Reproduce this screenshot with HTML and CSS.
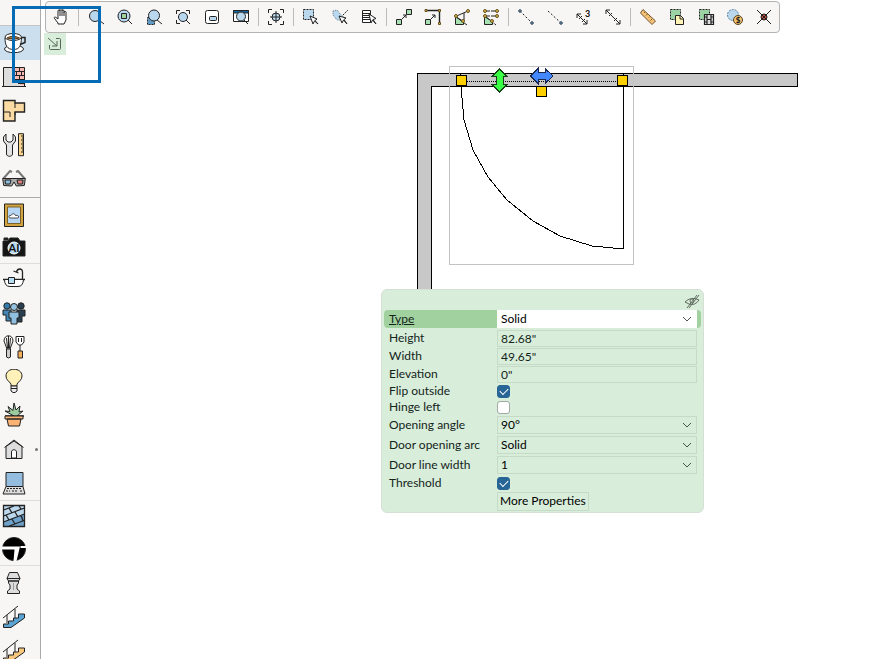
FILE: index.html
```html
<!DOCTYPE html>
<html lang="en">
<head>
<meta charset="utf-8">
<title>Floor plan editor</title>
<link rel="stylesheet" href="styles.css">
</head>
<body>
<nav class="sidebar" aria-label="Tools">
  <div class="side-head"><span class="dot"></span></div>
  <div class="group group-main">
    <button class="tool active" aria-label="Furniture"><svg viewBox="0 0 24 24"><ellipse cx="12" cy="18" rx="9.5" ry="3.7" fill="#fff"/><path d="M3 7c0 7 2 11.500 8.500 11.500S19 14 19.500 7z" fill="#fff"/><ellipse cx="11.200" cy="6" rx="8.200" ry="3.500" fill="#fff"/><path d="M5 7q6-3.500 12.500 0-6 2.500-12.500 0z" fill="#a97640" stroke="#593815" stroke-width="1"/><path d="M19.500 6.500h3.500v5l-5 2" fill="none" stroke-width="1.500"/></svg></button>
    <button class="tool" aria-label="Walls"><svg viewBox="0 0 24 24"><path d="M1.500 21V2.500H12V12l7 9z" fill="#ddd" stroke="none"/><path d="M11 2.500h11.500v18H19L13.500 14z" fill="#f6b8b0" stroke="none"/><path d="M1.500 22V2.500h21V22M0 21.500h24M12 6.500h10M12 10.500h10M13 14.500h9M16 18.500h6M17.500 3v3M14.500 7v3M19.500 7v3M17.500 11v3M15.500 15v3M20.500 15v3" fill="none"/></svg></button>
    <button class="tool" aria-label="Rooms"><svg viewBox="0 0 24 24"><path d="M1.500 1.500H13V4h9.500v9H13v9H1.500z" fill="#fcdaa3" stroke-width="1.400"/><path d="M13 4v5M1.500 13H8v5M13 13v3" fill="none"/></svg></button>
    <button class="tool" aria-label="Settings"><svg viewBox="0 0 24 24"><path d="M1.500 4v4l3 4v9c0 3 6 3 6 0v-9l3-4V4l-2.500-3v6L9 9H6L4 7V1z" fill="#e4e4e4"/><path d="M16.500.7h5v22h-5z" fill="#fbd58e"/><path d="M19 3h2.500M20 5h1.500M19 7h2.500M20 9h1.500M19 11h2.500M20 13h1.500M19 15h2.500M20 17h1.500M19 19h2.500" fill="none"/></svg></button>
    <button class="tool" aria-label="3D view"><svg viewBox="0 0 24 24"><path d="M1 12l7-8 2 1M23 12l-7-8-2 1" fill="none" stroke="#777" stroke-width="2"/><path d="M.7 11.500h22.600l-1 7-8 .500-2.300-4-2.300 4-8-.500z" fill="#aaa"/><path d="M3 13h6l-1 4H3.500z" fill="#8bbddd"/><path d="M15 13h6l-.500 4H16z" fill="#dd827e"/></svg></button>
  </div>
  <div class="group group-media">
    <button class="tool" aria-label="Pictures"><svg viewBox="0 0 24 24"><path d="M2.500 1h19v22.500h-19z" fill="#d3a340"/><path d="M5.500 4h13v16.500h-13z" fill="#b7d6f5" stroke="#7d6227"/><path d="M8 15c-2-1-1-3 1-2.500 1-2.500 4-2 4.500 0 3-.500 4 1.500 2.500 2.500z" fill="#fff" stroke-width=".8"/></svg></button>
    <button class="tool" aria-label="AI render"><svg viewBox="0 0 24 24"><path d="M1 6h5l2-3h8l2 3h5v15H1z" fill="#151515"/><path d="M2 3h4v2H2z" fill="#222"/><circle cx="12" cy="13" r="6" fill="#b6d8ed" stroke="#fff"/><text x="12" y="17" class="ai">AI</text></svg></button>
  </div>
  <div class="group group-objects">
    <button class="tool" aria-label="Bathroom"><svg viewBox="0 0 24 24"><path d="M20.500 12V5c0-4-5-4-6 0M11.500 4l5 2M1 12.500h22" fill="none" stroke-width="1.300"/><path d="M2.500 12.500q0 7 5.500 7h8q5 0 5.500-7z" fill="#fff"/><path d="M6.500 10.500h6v6h-6z" fill="#b9dcf0"/></svg></button>
    <button class="tool" aria-label="People"><svg viewBox="0 0 24 24"><circle cx="5" cy="5" r="3.200" fill="#347aaa"/><circle cx="19" cy="5" r="3.200" fill="#293f51"/><path d="M1 9h8l1 11H4v-6H1z" fill="#4186b4"/><path d="M15 9h8v6h-3v6h-6z" fill="#293f51"/><circle cx="12" cy="6" r="3.500" fill="#94c2df"/><path d="M7 11h10v6h-2v6H9v-6H7z" fill="#91bfdf"/></svg></button>
    <button class="tool" aria-label="Kitchen"><svg viewBox="0 0 24 24"><path d="M5 14L2 6c0-7 9-7 9 0l-3 8zM5.500 13L4.500 3M7.500 13l1-10M6.500 13V1" fill="none"/><path d="M4.500 14h4v8q-2 2-4 0z" fill="#ccc"/><path d="M14 1.500h8V7l-2.500 3h-3L14 7zM18 10v6" fill="#fff"/><path d="M16.500 3v4M19.500 3v4"/><path d="M16 16h4.500v7H16z" fill="#f2ae58"/></svg></button>
    <button class="tool" aria-label="Lighting"><svg viewBox="0 0 24 24"><path d="M9 17v-2c-2-3-5-4-5-8 0-9 16-9 16 0 0 4-3 5-5 8v2z" fill="#fff1b7"/><path d="M9 17h6v5l-2 1.500h-2L9 22zM9 19.500h6" fill="#eee"/></svg></button>
    <button class="tool" aria-label="Plants"><svg viewBox="0 0 24 24"><path d="M12 13L3 8l5 .500-2-5 5 4L12 0l2 7 4-4-1 6 4-1-6 5 7 0H3z" fill="#9bcb9f"/><path d="M3 13h18v3H3zM5 16h14l-1.500 7h-11z" fill="#fab275"/></svg></button>
    <button class="tool with-dot" aria-label="Buildings"><svg viewBox="0 0 24 24"><path d="M4 9.500v12h16v-12L12 4z" fill="#ddd"/><path d="M2.500 10.500L12 3l9.500 7.500" fill="none"/><path d="M9.500 21v-6c0-3 5-3 5 0v6z" fill="#fff"/></svg><span class="dot"></span></button>
    <button class="tool" aria-label="Electronics"><svg viewBox="0 0 24 24"><path d="M4 1.500h17v14H4z" fill="#95bde0"/><path d="M4 15.500h17l2 7.500H1z" fill="#ddd"/><path d="M5 17.500h15M4 20h4M10 20h6M18 20h3" fill="none" stroke-dasharray="2 1"/></svg></button>
  </div>
  <div class="group group-surfaces">
    <button class="tool" aria-label="Textures"><svg viewBox="0 0 24 24"><path d="M1.500 1.500h21v21h-21z" fill="#bcd8ec"/><path d="M2 18l20-8v12H2z" fill="#6da1ca" stroke="none"/><path d="M1.500 6L12 2M1.500 12l21-8M1.500 18l21-8M6 22.500l16-6M7 4l3 5M17 2l2 3M13 8l3 5M4 11l3 5M10 15l3 5M19 11l2 6M1.500 1.500h21v21h-21z" fill="none" stroke-width="1.300"/></svg></button>
    <button class="tool" aria-label="Terrain"><svg viewBox="0 0 24 24"><circle cx="12" cy="12" r="11.500" fill="#000"/><path d="M0 9.500h18L14.500 24h-3l1-11.500H0zM18.500 9H24v2h-5.500z" fill="#fff" stroke="none"/></svg></button>
  </div>
  <div class="group group-structure">
    <button class="tool" aria-label="Columns"><svg viewBox="0 0 24 24"><path d="M7.500 1.500h8L18 7.500 16.500 10h-10L5 7.500zM6.500 10h10v2l-1.500 2v4l2.500 2v2.500h-12V20L8 18v-4l-1.500-2z" fill="#ddd"/><path d="M5 7.500h13" fill="none"/><path d="M11.500 12v7" stroke="#999"/></svg></button>
    <button class="tool" aria-label="Stairs"><svg viewBox="0 0 24 24"><path d="M1.500 22.500V19h5v-3h5v-3h5v-4h6v4L9 22.500z" fill="#5ba3d2"/><path d="M1 13L16 1M5 10v8M13 4v9" fill="none"/></svg></button>
    <button class="tool" aria-label="Steps"><svg viewBox="0 0 24 24"><path d="M1.500 22.500V19h5v-3h5v-3h5v-4h6v4L9 22.500z" fill="#f8c77e"/><path d="M1 13L16 1M5 10v8M13 4v9" fill="none"/></svg></button>
  </div>
</nav>
<main class="workspace">
  <svg class="plan" viewBox="41 0 760 300" role="img" aria-label="Floor plan with door">
    <path d="M417.500 300V73.500H797.500V86.500H431.500V300" fill="#c8c8c8" stroke="#000"/>
    <path d="M449.500 66.500h184v198h-184z" fill="none" stroke="#c3c3c3"/>
    <path d="M460.500 73v13M623.500 73v176L592 246 560 236 533 221 507 200 488 177 473 150 464 120 461 87" fill="none" stroke="#000"/>
    <path d="M467 81.500h150" stroke="#000" stroke-dasharray="1 1"/>
    <g fill="#ffd000" stroke="#000"><path d="M456.500 75.500h10v10h-10zM617.500 75.500h10v10h-10zM536.500 86.500h10v10h-10z"/></g>
    <path d="M499.500 69l7.500 7.500h-4v8h4L499.500 92 492 84.500h4v-8h-4z" fill="#39ff45" stroke="#173f19"/>
    <path d="M530.500 76l7.500-7.500v4h7v-4l8 7.500-8 7.500v-4h-7v4z" fill="#4387ff" stroke="#1a2850"/>
  </svg>
  <div class="toolbar" role="toolbar" aria-label="Plan tools">
    <button aria-label="Pan"><svg viewBox="0 0 20 20"><path d="M7 16L3.500 11.500c-1-1 .500-2 1.500-1l2 1.500V4c0-1.500 2-1.500 2 0V2.500c0-1.500 2-1.500 2 0V4c0-1.500 2-1.500 2 0v1.500c0-1.500 2-1.500 2 0V13l-2 4H7zM9 4v5M11 4v5M13 5v4" fill="#fff"/></svg></button>
    <span class="sep"></span>
    <button aria-label="Zoom"><svg viewBox="0 0 20 20"><path d="M13 13l5 4"/><circle cx="9" cy="9" r="5.500" fill="#b9d8ee"/></svg></button>
    <button aria-label="Zoom to level"><svg viewBox="0 0 20 20"><path d="M13 13l4 4"/><circle cx="9" cy="9" r="6" fill="#b9d8ee"/><path d="M6.500 6.500h5v5h-5z" fill="#9ed19c"/></svg></button>
    <button aria-label="Zoom to selection"><svg viewBox="0 0 20 20"><path d="M3.500 10.500h7v7h-7z" fill="#609ac5" stroke-dasharray="2 1"/><path d="M13 13l5 4"/><circle cx="10" cy="8.500" r="5.500" fill="#b9d8ee"/></svg></button>
    <button aria-label="Zoom to fit"><svg viewBox="0 0 20 20"><path d="M3.500 7V3.500H7M13 3.500h3.500V7M3.500 13v3.500H7M13 13l4 4" fill="none"/><circle cx="10" cy="10" r="4.500" fill="#b9d8ee"/></svg></button>
    <button aria-label="Picture in picture"><svg viewBox="0 0 20 20"><rect x="3.500" y="3.500" width="13" height="13" rx="2" fill="#fff"/><rect x="7.500" y="9.500" width="7" height="4" rx="1" fill="#b9d8ee"/></svg></button>
    <button aria-label="Preview window"><svg viewBox="0 0 20 20"><path d="M2.500 3.500h15v11h-15z" fill="#fff"/><path d="M2.500 3.500h15V6h-15z" fill="#1768a0"/><path d="M13 13l4 4"/><circle cx="10" cy="9.500" r="4.500" fill="#b9d8ee"/></svg></button>
    <span class="sep"></span>
    <button aria-label="Center"><svg viewBox="0 0 20 20"><path d="M2.500 6V2.500H6M14 2.500h3.500V6M2.500 14v3.500H6M14 17.500h3.500V14" fill="none"/><circle cx="10" cy="10" r="4" fill="#b9d8ee"/><path d="M10 4v12M4 10h12"/></svg></button>
    <span class="sep"></span>
    <button aria-label="Select area"><svg viewBox="0 0 20 20"><path d="M2.500 2.500h10v10h-10z" fill="#b9d8ee" stroke-dasharray="2 1"/><path d="M9 9l3 8 1.500-3 3.500 3-3-3.500 2-1.500z" fill="#fff"/></svg></button>
    <button aria-label="Lasso"><svg viewBox="0 0 20 20"><path d="M3 4l4-1 4 5 3 2-2 3-5 0-4-5z" fill="#b9d8ee" stroke="#678" stroke-dasharray="1 1"/><path d="M13 8l5-5" stroke-dasharray="2 1"/><path d="M9 9l3 7 1.500-3 3.500 4-3-4.500 2-1.500z" fill="#fff"/></svg></button>
    <button aria-label="Select from list"><svg viewBox="0 0 20 20"><path d="M3.500 3.500h8v12h-8z" fill="#fff"/><path d="M4 6.500h7M4 8.500h7M4 10.500h7M4 12.500h7"/><path d="M10 7l2 9 1.500-3 3.500 4-3-4.500 3-1z" fill="#fff"/></svg></button>
    <span class="sep"></span>
    <button aria-label="Resize"><svg viewBox="0 0 20 20"><path d="M12.500 2.500h5v5h-5zM2.500 12.500h5v5h-5z" fill="#a8e0b4"/><path d="M8 12l4-4M9 8h3v3" fill="none"/></svg></button>
    <button aria-label="Resize from corner"><svg viewBox="0 0 20 20"><path d="M3 3.500h13.500V17" fill="none" stroke-width="1.400"/><path d="M2.500 12.500h5v5h-5z" fill="#a8e0b4"/><path d="M8 12l4-4M9 8h3v3" fill="none"/><path d="M2 2.500h2v2H2zM15.500 2.500h2v2h-2zM15.500 15.500h2v2h-2z" fill="#ddb449" stroke="#665321"/></svg></button>
    <button aria-label="Rotate point"><svg viewBox="0 0 20 20"><path d="M3.500 9.500l8 5v3h-8z" fill="#a8e0b4"/><path d="M3.500 9.500L16 4M3.500 9.500L15 18M12 6v7" fill="none"/><g fill="#ddb449" stroke="#665321"><circle cx="4" cy="9" r="1.500"/><circle cx="16" cy="4" r="1.500"/><circle cx="11" cy="14" r="1.500"/></g></svg></button>
    <button aria-label="Rotate edge"><svg viewBox="0 0 20 20"><path d="M3.500 9.500l8 5v3h-8z" fill="#a8e0b4"/><path d="M4 4h13M4 9h13M4 9l11 9" fill="none" stroke-dasharray="5 1"/><g fill="#ddb449" stroke="#665321"><circle cx="4" cy="4" r="1.500"/><circle cx="16" cy="4" r="1.500"/><circle cx="4" cy="9" r="1.500"/><circle cx="16" cy="9" r="1.500"/><circle cx="11" cy="14" r="1.500"/></g></svg></button>
    <span class="sep"></span>
    <button aria-label="Line"><svg viewBox="0 0 20 20"><path d="M4 4l12 12" stroke-dasharray="2 2"/><g fill="#6f91ac" stroke="#354b60"><circle cx="4" cy="4" r="1.300"/><circle cx="16" cy="16" r="1.300"/></g></svg></button>
    <button aria-label="Line end"><svg viewBox="0 0 20 20"><path d="M3 4l13 12" stroke-dasharray="2 2"/><circle cx="16" cy="16" r="1.300" fill="#6f91ac" stroke="#354b60"/></svg></button>
    <button aria-label="Dimension steps"><svg viewBox="0 0 20 20"><path d="M3 7l10 10M3 11V7h4M13 13v4H9M5 12l3-3M8 15l3-3" fill="none"/><text x="11" y="10" class="three">3</text></svg></button>
    <button aria-label="Dimension"><svg viewBox="0 0 20 20"><path d="M3 3l14 14M3 7V3h4M17 13v4h-4M6 9l3-3M11 14l3-3" fill="none"/></svg></button>
    <span class="sep"></span>
    <button aria-label="Measure"><svg viewBox="0 0 20 20"><path d="M5 2.500L17.500 14 14 17.500 2.500 6z" fill="#f7c477" stroke="#70542d"/><path d="M7 5L6 6M9.500 7L8 8.500M12 9.500L11 10.500M14 12l-1.500 1.500" stroke="#70542d"/></svg></button>
    <button aria-label="Copy to page"><svg viewBox="0 0 20 20"><path d="M3.500 2.500h10v10h-10z" fill="#9bd3a5" stroke-dasharray="2 1"/><path d="M8.500 8.500h5l3 3v6h-8z" fill="#fff4b6"/><path d="M13 9v3h3" fill="none"/></svg></button>
    <button aria-label="Copy to film"><svg viewBox="0 0 20 20"><path d="M3.500 2.500h10v10h-10z" fill="#9bd3a5" stroke-dasharray="2 1"/><path d="M8.500 7.500h9v10h-9zM11 8v9M15 8v9M11 12.500h4M9 10h2M9 15h2M15 10h2M15 15h2" fill="#ddd" stroke-width="1.200"/></svg></button>
    <button aria-label="Costs"><svg viewBox="0 0 20 20"><circle cx="8" cy="8" r="5.500" fill="#b9d8ee" stroke="#567e9d" stroke-dasharray="2 1"/><circle cx="13" cy="13" r="4.500" fill="#f3c16f" stroke="#584221"/><text x="13" y="16" class="dollar">$</text></svg></button>
    <button aria-label="Delete"><svg viewBox="0 0 20 20"><path d="M3 3l14 14M3 17L17 3"/><circle cx="10" cy="10" r="3" fill="#b94b40"/><path d="M8 8l4 4M8 12l4-4"/></svg></button>
  </div>
  <button class="dock" aria-label="Dock toolbar"><svg viewBox="0 0 22 22"><path d="M4 5l9 8M13 8v5H8M12 5.500h3.500q1 0 1 1v9q0 1-1 1h-9q-1 0-1-1V12" fill="none" stroke="#566758"/></svg></button>
  <form class="panel">
    <header class="panel-head"><button type="button" class="eye" aria-label="Hide panel"><svg viewBox="0 0 18 16"><path d="M2 9q6-6 14-2-4 6-10 4M2 9l4 2M4 15L14 2M6 15L16 2" fill="none" stroke="#606c60"/><circle cx="9" cy="8" r="2" fill="none" stroke="#606c60"/></svg></button></header>
    <div class="row row-type"><label for="type">Type</label><div class="pick"><select id="type"><option>Solid</option></select><svg viewBox="0 0 8 6"><path d="M0 1l4 4 4-4"/></svg></div></div>
    <div class="row row-field"><label for="height">Height</label><input id="height" type="text" value="82.68&quot;"></div>
    <div class="row row-field"><label for="width">Width</label><input id="width" type="text" value="49.65&quot;"></div>
    <div class="row row-field"><label for="elevation">Elevation</label><input id="elevation" type="text" value="0&quot;"></div>
    <div class="row row-check"><label for="flip">Flip outside</label><input id="flip" type="checkbox" checked></div>
    <div class="row row-check"><label for="hinge">Hinge left</label><input id="hinge" type="checkbox"></div>
    <div class="row row-pick"><label for="angle">Opening angle</label><div class="pick"><select id="angle"><option>90°</option></select><svg viewBox="0 0 8 6"><path d="M0 1l4 4 4-4"/></svg></div></div>
    <div class="row row-pick"><label for="arc">Door opening arc</label><div class="pick"><select id="arc"><option>Solid</option></select><svg viewBox="0 0 8 6"><path d="M0 1l4 4 4-4"/></svg></div></div>
    <div class="row row-pick"><label for="line">Door line width</label><div class="pick"><select id="line"><option>1</option></select><svg viewBox="0 0 8 6"><path d="M0 1l4 4 4-4"/></svg></div></div>
    <div class="row row-check"><label for="threshold">Threshold</label><input id="threshold" type="checkbox" checked></div>
    <div class="row row-more"><span></span><button type="button" class="more">More Properties</button></div>
  </form>
</main>
<div class="highlight"></div>
</body>
</html>
```
FILE: styles.css
```css
* { box-sizing: border-box; }
body {
  margin: 0;
  height: 100vh;
  display: flex;
  overflow: hidden;
  background: #fff;
  color: #14241a;
  font: 12px/16px Lato, "Open Sans", sans-serif;
}
button, input, select { font: inherit; color: inherit; margin: 0; }
button { background: none; border: 0; padding: 0; }
svg { display: block; stroke: #222; }
svg text { stroke: none; fill: #111; font-weight: 700; }

.sidebar {
  flex: 0 0 41px;
  background: #f7f6f5;
  border-right: 1px solid #ababab;
}
.side-head {
  height: 26px;
  padding: 14px 12px 0;
  border-bottom: 1px solid #c4c4c4;
}
.dot { display: block; width: 2px; height: 2px; border-radius: 50%; background: #777; }
.group { display: grid; grid-auto-rows: 34px; border-bottom: 1px solid #ddd; }
.group-main { border-bottom: 1px solid #aaa; padding-bottom: 1px; margin-bottom: 1px; }
.group-media { grid-auto-rows: 32px; margin-bottom: -2px; }
.group-objects { margin-bottom: -2px; }
.group-surfaces { grid-auto-rows: 33px; }
.tool { display: flex; align-items: center; width: 100%; padding: 0 2px; }
.tool svg { flex: none; width: 24px; height: 24px; }
.tool.active { background: #ccdfee; }
.with-dot { justify-content: space-between; }
.with-dot .dot { width: 3px; height: 3px; }
.ai { font-size: 11px; text-anchor: middle; }
.three { font-size: 9px; }
.dollar { font-size: 8px; text-anchor: middle; }

.workspace { position: relative; flex: 1; padding: 1px 3px; }
.plan {
  position: absolute;
  left: 0;
  top: 0;
  width: 760px;
  height: 300px;
  shape-rendering: crispEdges;
}
.toolbar {
  position: relative;
  display: flex;
  width: max-content;
  margin-left: 1px;
  padding-right: 1px;
  background: #f7f6f5;
  border: 1px solid #b3b3b3;
  border-radius: 4px;
}
.toolbar button { display: grid; place-items: center; width: 29px; height: 30px; }
.toolbar svg { width: 20px; height: 20px; }
.sep { width: 1px; margin: 6px 2px 6px 3px; background: #bbb; }
.dock { display: block; background: #d8edda; }
.dock svg { width: 22px; height: 22px; }

.panel {
  position: absolute;
  left: 340px;
  top: 289px;
  width: 323px;
  padding: 1px 2px;
  background: #d8edda;
  border: 1px solid #d6dfd6;
  border-radius: 6px;
}
.panel-head { display: flex; justify-content: flex-end; height: 19px; padding: 1px 0; }
.eye svg { width: 18px; height: 16px; }
.row {
  display: grid;
  grid-template-columns: 108px 1fr;
  align-items: center;
  padding: 0 4px 0 5px;
}
.row-type { height: 18px; margin-bottom: 1px; background: #a1d19f; border-radius: 4px; }
.row-type label { text-decoration: underline; }
.row-field { height: 18px; }
.row-check { height: 16px; }
.row-pick { height: 20px; }
.row-more { height: 20px; }
input[type="text"], select {
  display: block;
  width: 100%;
  height: 18px;
  padding: 0 3px;
  appearance: none;
  border: 1px solid #c5dac7;
  border-radius: 0;
  background: transparent;
  outline: 0;
}
input[type="text"] { height: 17px; }
.pick { position: relative; color: #000; }
.pick svg {
  position: absolute;
  right: 6px;
  top: 6px;
  width: 8px;
  height: 6px;
  fill: none;
  stroke: #48564a;
  pointer-events: none;
}
.row-type select { background: #fff; border-color: #fff; }
input[type="checkbox"] {
  appearance: none;
  display: grid;
  place-items: center;
  width: 13px;
  height: 13px;
  border: 1px solid #a1aaa3;
  border-radius: 3px;
  background: #fff;
}
input[type="checkbox"]:checked { background: #286597; border-color: #286597; }
input[type="checkbox"]:checked::after {
  content: "";
  width: 7px;
  height: 4px;
  margin-bottom: 2px;
  border: solid #fff;
  border-width: 0 0 1px 1px;
  transform: rotate(-45deg);
}
.more { justify-self: start; height: 19px; padding: 0 2px; border: 1px solid #c5dac7; color: #000; }

.highlight {
  position: absolute;
  left: 12px;
  top: 6px;
  width: 89px;
  height: 77px;
  border: 3px solid #066bb5;
  pointer-events: none;
}
```
